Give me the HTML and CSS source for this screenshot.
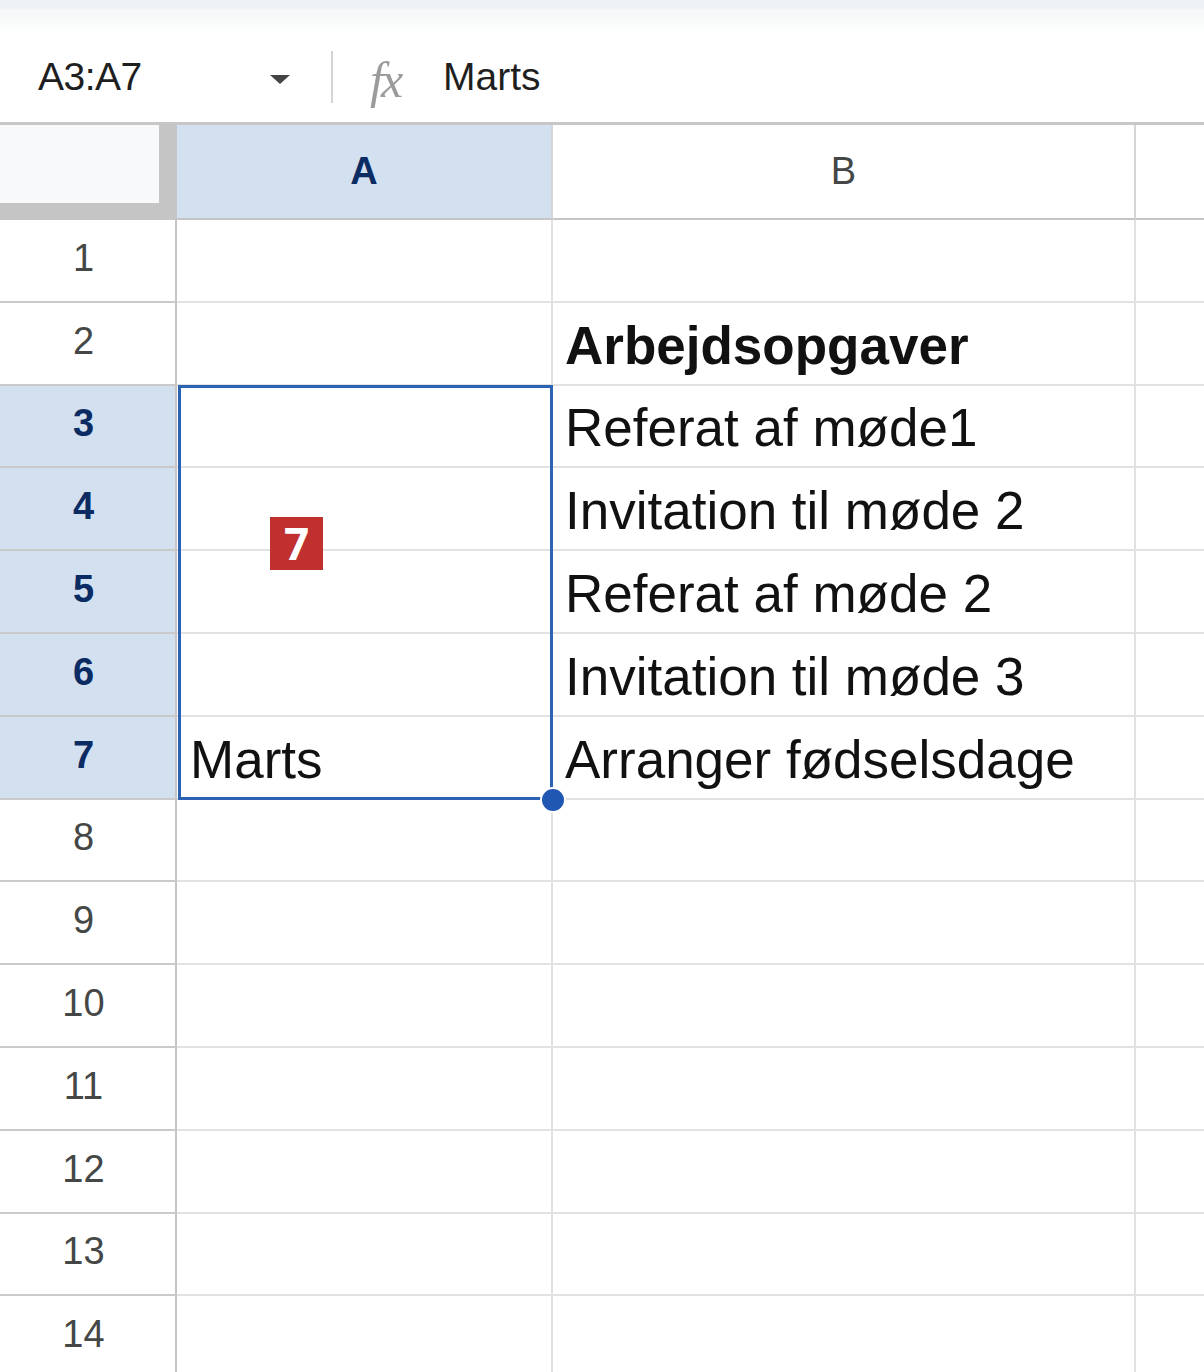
FILE: index.html
```html
<!DOCTYPE html>
<html lang="da">
<head>
<meta charset="utf-8">
<title>Ark</title>
<link rel="stylesheet" href="styles.css">
</head>
<body>
<div class="topstrip"></div>
<div class="formulabar">
  <div class="namebox">A3:A7</div>
  <div class="dropdown"></div>
  <div class="divider"></div>
  <div class="fx">fx</div>
  <div class="formula">Marts</div>
</div>
<div class="sheet">
  <div class="row header">
    <div class="corner"></div>
    <div class="colhead selected">A</div>
    <div class="colhead">B</div>
    <div class="colhead rest"></div>
  </div>
  <div class="row"><div class="rowhead">1</div><div class="cell"></div><div class="cell"></div><div class="cell rest"></div></div>
  <div class="row"><div class="rowhead">2</div><div class="cell"></div><div class="cell bold">Arbejdsopgaver</div><div class="cell rest"></div></div>
  <div class="row"><div class="rowhead selected">3</div><div class="cell"></div><div class="cell">Referat af møde1</div><div class="cell rest"></div></div>
  <div class="row"><div class="rowhead selected">4</div><div class="cell"></div><div class="cell">Invitation til møde 2</div><div class="cell rest"></div></div>
  <div class="row"><div class="rowhead selected">5</div><div class="cell"></div><div class="cell">Referat af møde 2</div><div class="cell rest"></div></div>
  <div class="row"><div class="rowhead selected">6</div><div class="cell"></div><div class="cell">Invitation til møde 3</div><div class="cell rest"></div></div>
  <div class="row"><div class="rowhead selected">7</div><div class="cell first">Marts</div><div class="cell">Arranger fødselsdage</div><div class="cell rest"></div></div>
  <div class="row"><div class="rowhead">8</div><div class="cell"></div><div class="cell"></div><div class="cell rest"></div></div>
  <div class="row"><div class="rowhead">9</div><div class="cell"></div><div class="cell"></div><div class="cell rest"></div></div>
  <div class="row"><div class="rowhead">10</div><div class="cell"></div><div class="cell"></div><div class="cell rest"></div></div>
  <div class="row"><div class="rowhead">11</div><div class="cell"></div><div class="cell"></div><div class="cell rest"></div></div>
  <div class="row"><div class="rowhead">12</div><div class="cell"></div><div class="cell"></div><div class="cell rest"></div></div>
  <div class="row"><div class="rowhead">13</div><div class="cell"></div><div class="cell"></div><div class="cell rest"></div></div>
  <div class="row"><div class="rowhead">14</div><div class="cell"></div><div class="cell"></div><div class="cell rest"></div></div>

  <div class="selection"><div class="handle"></div></div>
  <div class="badge">7</div>
</div>
</body>
</html>
```
FILE: styles.css
```css
* { box-sizing: border-box; }
html, body {
  margin: 0;
  padding: 0;
  background: #ffffff;
  overflow: hidden;
  height: 1372px;
}
body {
  font-family: "Liberation Sans", Arial, sans-serif;
  color: #111;
}
.topstrip {
  height: 35px;
  background: linear-gradient(to bottom, #edf1f4 0, #edf1f4 8px, #f4f7f7 9px, #ffffff 35px);
}
.formulabar {
  height: 90px;
  display: flex;
  align-items: center;
  background: #ffffff;
  border-bottom: 3px solid #c6c7c6;
  padding-bottom: 3px;
}
.namebox {
  width: 270px;
  padding-left: 38px;
  font-size: 39px;
  color: #1f1f1f;
  letter-spacing: -0.5px;
}
.dropdown {
  width: 0;
  height: 0;
  border-left: 10px solid transparent;
  border-right: 10px solid transparent;
  border-top: 9px solid #444;
  margin-top: 4px;
}
.divider {
  width: 2px;
  height: 52px;
  background: #d4d4d4;
  margin-left: 41px;
}
.fx {
  margin-left: 37px;
  width: 73px;
  font-family: "Liberation Serif", serif;
  font-style: italic;
  font-size: 50px;
  color: #9b9b9b;
  letter-spacing: -3px;
  margin-top: 6px;
}
.formula {
  font-size: 39px;
  color: #1f1f1f;
}
.sheet {
  position: relative;
}
.row {
  display: grid;
  grid-template-columns: 177px 376px 583px 1fr;
  height: 82.8px;
}
.row.header {
  height: 95px;
}
.corner {
  background: #f8f9fa;
  border-right: 18px solid #c4c5c4;
  border-bottom: 17px solid #c4c5c4;
}
.colhead {
  display: flex;
  align-items: center;
  justify-content: center;
  font-size: 38px;
  color: #444746;
  border-right: 2px solid #d6d6d6;
  border-bottom: 2px solid #c4c5c4;
  background: #ffffff;
}
.colhead.selected {
  background: #d3e0f0;
  color: #0b2b63;
  font-weight: bold;
}
.colhead.rest { border-right: 0; }
.rowhead {
  display: flex;
  align-items: center;
  justify-content: center;
  font-size: 38px;
  color: #444746;
  border-right: 2px solid #c4c5c4;
  border-bottom: 2px solid #c9cac9;
  padding-bottom: 4px;
  padding-right: 8px;
}
.rowhead.selected {
  background: #d3e0f0;
  color: #0b2b63;
  font-weight: bold;
}
.cell {
  display: flex;
  align-items: flex-end;
  padding-left: 12px;
  padding-bottom: 8px;
  font-size: 53px;
  line-height: 60px;
  color: #111;
  border-right: 2px solid #e1e1e1;
  border-bottom: 2px solid #e2e2e2;
  white-space: nowrap;
}
.cell.first { padding-left: 13px; }
.cell.rest { border-right: 0; }
.cell.bold { font-weight: bold; }
.selection {
  position: absolute;
  left: 178px;
  top: 260px;
  width: 375px;
  height: 415px;
  border: 3px solid #2b62b2;
}
.handle {
  position: absolute;
  right: -16px;
  bottom: -16px;
  width: 26px;
  height: 26px;
  border-radius: 50%;
  background: #1f57b3;
  border: 2px solid #ffffff;
}
.badge {
  position: absolute;
  left: 270px;
  top: 392px;
  width: 53px;
  height: 53px;
  background: #bf302e;
  color: #ffffff;
  font-family: "Open Sans", "Liberation Sans", sans-serif;
  font-weight: bold;
  font-size: 44px;
  line-height: 53px;
  text-align: center;
}
```
